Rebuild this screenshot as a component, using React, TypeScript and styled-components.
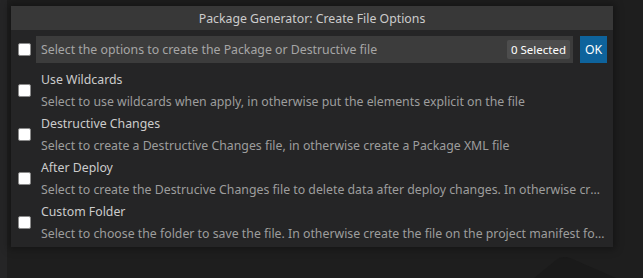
import React from 'react';
import styled, { createGlobalStyle } from 'styled-components';

const GlobalStyle = createGlobalStyle`
  html, body {
    margin: 0;
    padding: 0;
    background: #1e1e1e;
    font-family: "Noto Sans", "Open Sans", sans-serif;
    overflow: hidden;
  }
`;

const Screen = styled.div`
  position: relative;
  width: 643px;
  height: 278px;
  display: flex;
  background: #1e1e1e;
`;

const SideEdge = styled.div`
  width: 7px;
  background: #252526;
`;

const Stage = styled.div`
  flex: 1;
  padding: 6px 0 0 4px;
`;

const Panel = styled.div`
  position: relative;
  z-index: 1;
  width: 602px;
  background: #252526;
  box-shadow: 0 0 8px 2px rgba(0, 0, 0, 0.36);
  padding-bottom: 3px;
`;

const TitleBar = styled.div`
  height: 24px;
  display: flex;
  align-items: center;
  justify-content: center;
  background: #383838;
  color: #cccccc;
  font-size: 12.3px;
`;

const InputRow = styled.div`
  display: flex;
  align-items: center;
  padding: 6px 6px 5px 7px;
`;

const Check = styled.span`
  flex: none;
  width: 11px;
  height: 11px;
  background: #ffffff;
  border: 1px solid #8a8a8a;
  border-radius: 2px;
`;

const InputBox = styled.div`
  flex: 1;
  height: 27px;
  margin-left: 5px;
  display: flex;
  align-items: center;
  background: #3c3c3c;
  padding: 0 3px 0 5px;
  min-width: 0;
`;

const Placeholder = styled.span`
  flex: 1;
  color: #a6a6a6;
  font-size: 12.3px;
  white-space: nowrap;
`;

const Badge = styled.span`
  height: 19px;
  padding: 0 4px;
  display: flex;
  align-items: center;
  background: #4d4d4d;
  color: #ffffff;
  font-size: 11.5px;
  border-radius: 2px;
`;

const OkButton = styled.button`
  width: 27px;
  height: 27px;
  margin-left: 7px;
  border: none;
  padding: 0;
  background: #0e639c;
  color: #ffffff;
  font-family: inherit;
  font-size: 12.3px;
`;

const List = styled.div`
  display: flex;
  flex-direction: column;
`;

const Row = styled.div`
  height: 44px;
  display: flex;
  align-items: center;
  padding: 0 8px 0 7px;
`;

const RowText = styled.div`
  flex: 1;
  min-width: 0;
  margin-left: 10px;
  padding-top: 1px;
  display: flex;
  flex-direction: column;
`;

const Label = styled.div`
  line-height: 22px;
  font-size: 12.3px;
  color: #cccccc;
  white-space: nowrap;
`;

const Detail = styled.div`
  line-height: 21px;
  font-size: 12.3px;
  color: #9d9d9d;
  white-space: nowrap;
  overflow: hidden;
  text-overflow: ellipsis;
`;

const Watermark = styled.svg`
  position: absolute;
  left: 520px;
  top: 252px;
`;

const options = [
  {
    label: 'Use Wildcards',
    detail: 'Select to use wildcards when apply, in otherwise put the elements explicit on the file',
  },
  {
    label: 'Destructive Changes',
    detail: 'Select to create a Destructive Changes file, in otherwise create a Package XML file',
  },
  {
    label: 'After Deploy',
    detail:
      'Select to create the Destrucive Changes file to delete data after deploy changes. In otherwise create the file to delete data before deploy',
  },
  {
    label: 'Custom Folder',
    detail:
      'Select to choose the folder to save the file. In otherwise create the file on the project manifest folder',
  },
];

export default function App() {
  return (
    <Screen>
      <GlobalStyle />
      <SideEdge />
      <Stage>
        <Panel>
          <TitleBar>Package Generator: Create File Options</TitleBar>
          <InputRow>
            <Check />
            <InputBox>
              <Placeholder>Select the options to create the Package or Destructive file</Placeholder>
              <Badge>0 Selected</Badge>
            </InputBox>
            <OkButton>OK</OkButton>
          </InputRow>
          <List>
            {options.map((o) => (
              <Row key={o.label}>
                <Check />
                <RowText>
                  <Label>{o.label}</Label>
                  <Detail>{o.detail}</Detail>
                </RowText>
              </Row>
            ))}
          </List>
        </Panel>
      </Stage>
      <Watermark width="110" height="26" viewBox="0 0 110 26">
        <path d="M14 26 L36 8 Q42 3 50 6 L96 26 Z" fill="#1a1a1a" />
      </Watermark>
    </Screen>
  );
}
